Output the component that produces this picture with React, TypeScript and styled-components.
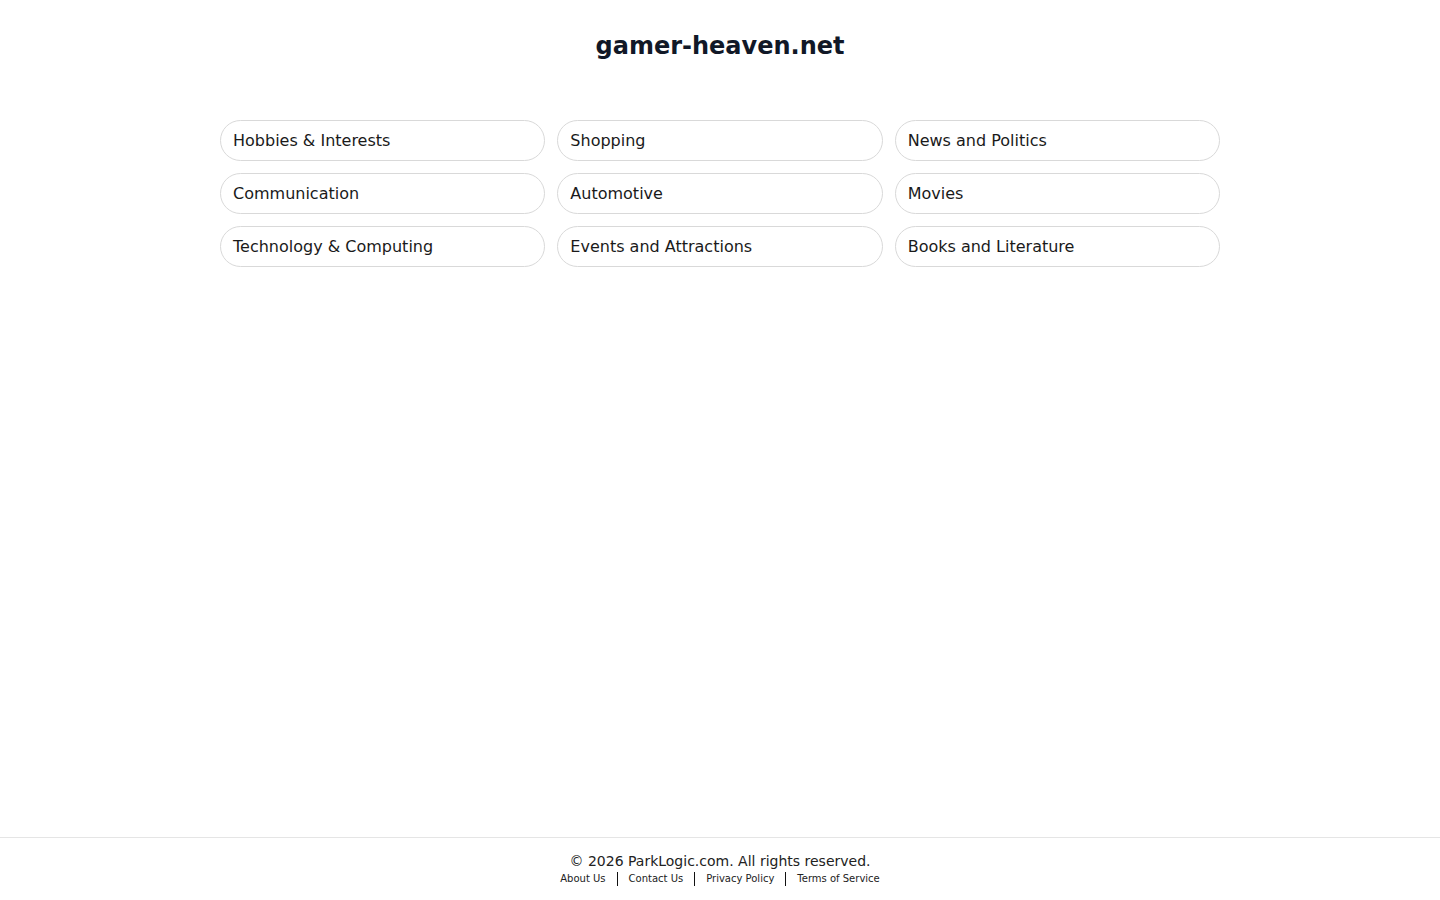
import React from 'react';
import styled, { createGlobalStyle } from 'styled-components';

const categories = [
  'Hobbies & Interests',
  'Shopping',
  'News and Politics',
  'Communication',
  'Automotive',
  'Movies',
  'Technology & Computing',
  'Events and Attractions',
  'Books and Literature',
];

const footerLinks = ['About Us', 'Contact Us', 'Privacy Policy', 'Terms of Service'];

const GlobalStyle = createGlobalStyle`
  html, body {
    margin: 0;
    padding: 0;
    background: #fff;
    font-family: "DejaVu Sans", "Noto Sans", sans-serif;
  }
`;

const Page = styled.div`
  min-height: 100vh;
  display: flex;
  flex-direction: column;
`;

const Main = styled.main`
  flex: 1;
  display: flex;
  flex-direction: column;
  align-items: center;
`;

const Title = styled.h1`
  margin: 29px 0 0;
  font-size: 24px;
  line-height: 34px;
  font-weight: 700;
  color: #111827;
`;

const Grid = styled.div`
  margin-top: 57px;
  width: 1000px;
  display: grid;
  grid-template-columns: repeat(3, 1fr);
  gap: 12px;
`;

const Pill = styled.a`
  display: flex;
  align-items: center;
  height: 41px;
  box-sizing: border-box;
  padding: 0 12px;
  border: 1px solid #d9d9d9;
  border-radius: 21px;
  font-size: 16px;
  color: #1a1a1a;
  text-decoration: none;
  cursor: pointer;
`;

const Footer = styled.footer`
  border-top: 1px solid #e5e5e5;
  height: 63px;
  display: flex;
  flex-direction: column;
  align-items: center;
  padding-top: 14px;
  box-sizing: border-box;
`;

const Copy = styled.div`
  font-size: 14px;
  line-height: 18px;
  color: #222;
`;

const Links = styled.nav`
  display: flex;
  align-items: center;
  margin-top: 2px;
`;

const FooterLink = styled.a<{ $first?: boolean }>`
  font-size: 10px;
  line-height: 16px;
  color: #222;
  text-decoration: none;
  padding: 0 11px;
  border-left: ${(p) => (p.$first ? 'none' : '1px solid #111')};
  height: 14px;
  display: flex;
  align-items: center;
`;

export default function App() {
  return (
    <Page>
      <GlobalStyle />
      <Main>
        <Title>gamer-heaven.net</Title>
        <Grid>
          {categories.map((c) => (
            <Pill key={c}>{c}</Pill>
          ))}
        </Grid>
      </Main>
      <Footer>
        <Copy>© 2026 ParkLogic.com. All rights reserved.</Copy>
        <Links>
          {footerLinks.map((l, i) => (
            <FooterLink key={l} $first={i === 0}>
              {l}
            </FooterLink>
          ))}
        </Links>
      </Footer>
    </Page>
  );
}
